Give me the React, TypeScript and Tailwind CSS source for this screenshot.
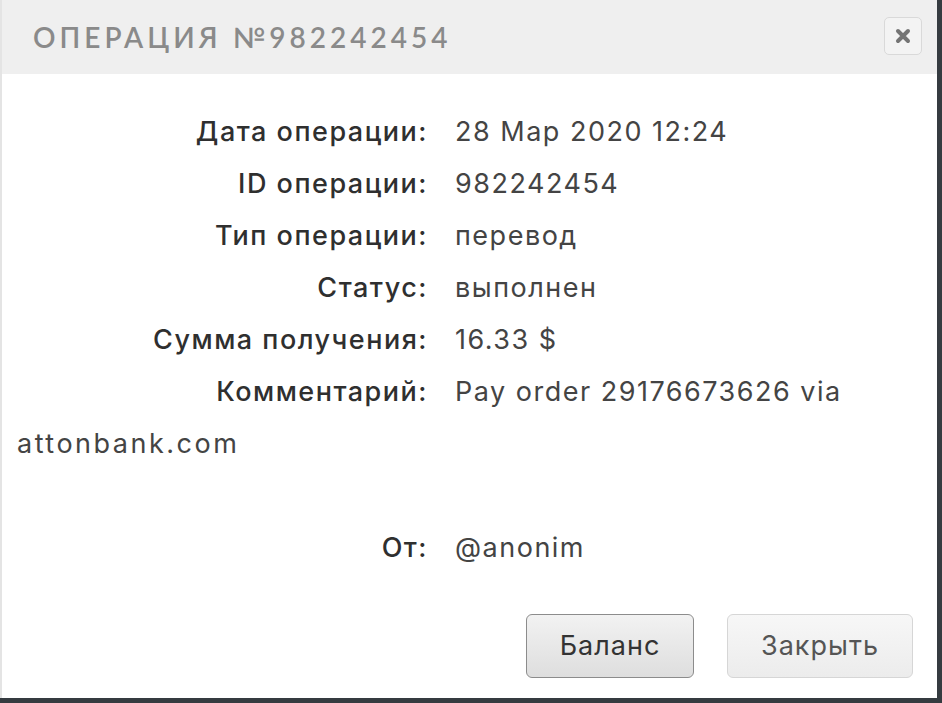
import React from "react";

const rows: [string, string][] = [
  ["Дата операции:", "28 Мар 2020 12:24"],
  ["ID операции:", "982242454"],
  ["Тип операции:", "перевод"],
  ["Статус:", "выполнен"],
  ["Сумма получения:", "16.33 $"],
];

function Row({ label, value }: { label: string; value: string }) {
  return (
    <div>
      <span className="inline-block w-[411px] text-right font-medium text-[#2f2f2f]">{label}</span>
      <span className="ml-[27px] text-[#444]">{value}</span>
    </div>
  );
}

export default function App() {
  return (
    <div className="w-[942px] h-[703px] bg-[#353b40] overflow-hidden">
      <div className="w-[937px] h-[698px] bg-white border-l-2 border-[#e4e4e4] flex flex-col">
        <div className="h-[74px] bg-[#efefef] flex items-center justify-between pl-[31px] pr-[15px]">
          <div
            className="text-[28px] font-semibold tracking-[4px] text-[#8a8a8a]"
            style={{ fontFamily: "Lato, 'Noto Sans', sans-serif" }}
          >
            ОПЕРАЦИЯ №982242454
          </div>
          <div className="w-[38px] h-[38px] rounded-[5px] border border-[#d9d9d9] bg-[#f3f3f3] flex items-center justify-center -mt-[2px]">
            <svg width="16" height="16" viewBox="0 0 16 16">
              <path d="M3 3 L13 13 M13 3 L3 13" stroke="#747474" strokeWidth="4" strokeLinecap="round" />
            </svg>
          </div>
        </div>
        <div
          className="px-[15px] pt-[32px] text-[27px] leading-[52px] tracking-[1.5px]"
          style={{ fontFamily: "Inter, 'Noto Sans', sans-serif" }}
        >
          {rows.map(([l, v]) => (
            <Row key={l} label={l} value={v} />
          ))}
          <div className="text-[#444]">
            <span className="inline-block w-[411px] text-right font-medium text-[#2f2f2f]">Комментарий:</span>
            <span className="ml-[27px]">Pay order 29176673626 via</span>{" "}
            <span className="tracking-[2.5px]">attonbank.com</span>
          </div>
          <div className="h-[52px]" />
          <Row label="От:" value="@anonim" />
          <div className="flex justify-end gap-[33px] mt-[40px] pr-[9px] tracking-[1px]">
            <button className="w-[168px] h-[64px] rounded-[6px] border border-[#8c8c8c] bg-gradient-to-b from-[#f2f2f2] to-[#dedede] text-[#333] text-[27px]">
              Баланс
            </button>
            <button className="w-[186px] h-[64px] rounded-[6px] border border-[#d6d6d6] bg-gradient-to-b from-[#f7f7f7] to-[#ececec] text-[#555] text-[27px]">
              Закрыть
            </button>
          </div>
        </div>
      </div>
    </div>
  );
}
